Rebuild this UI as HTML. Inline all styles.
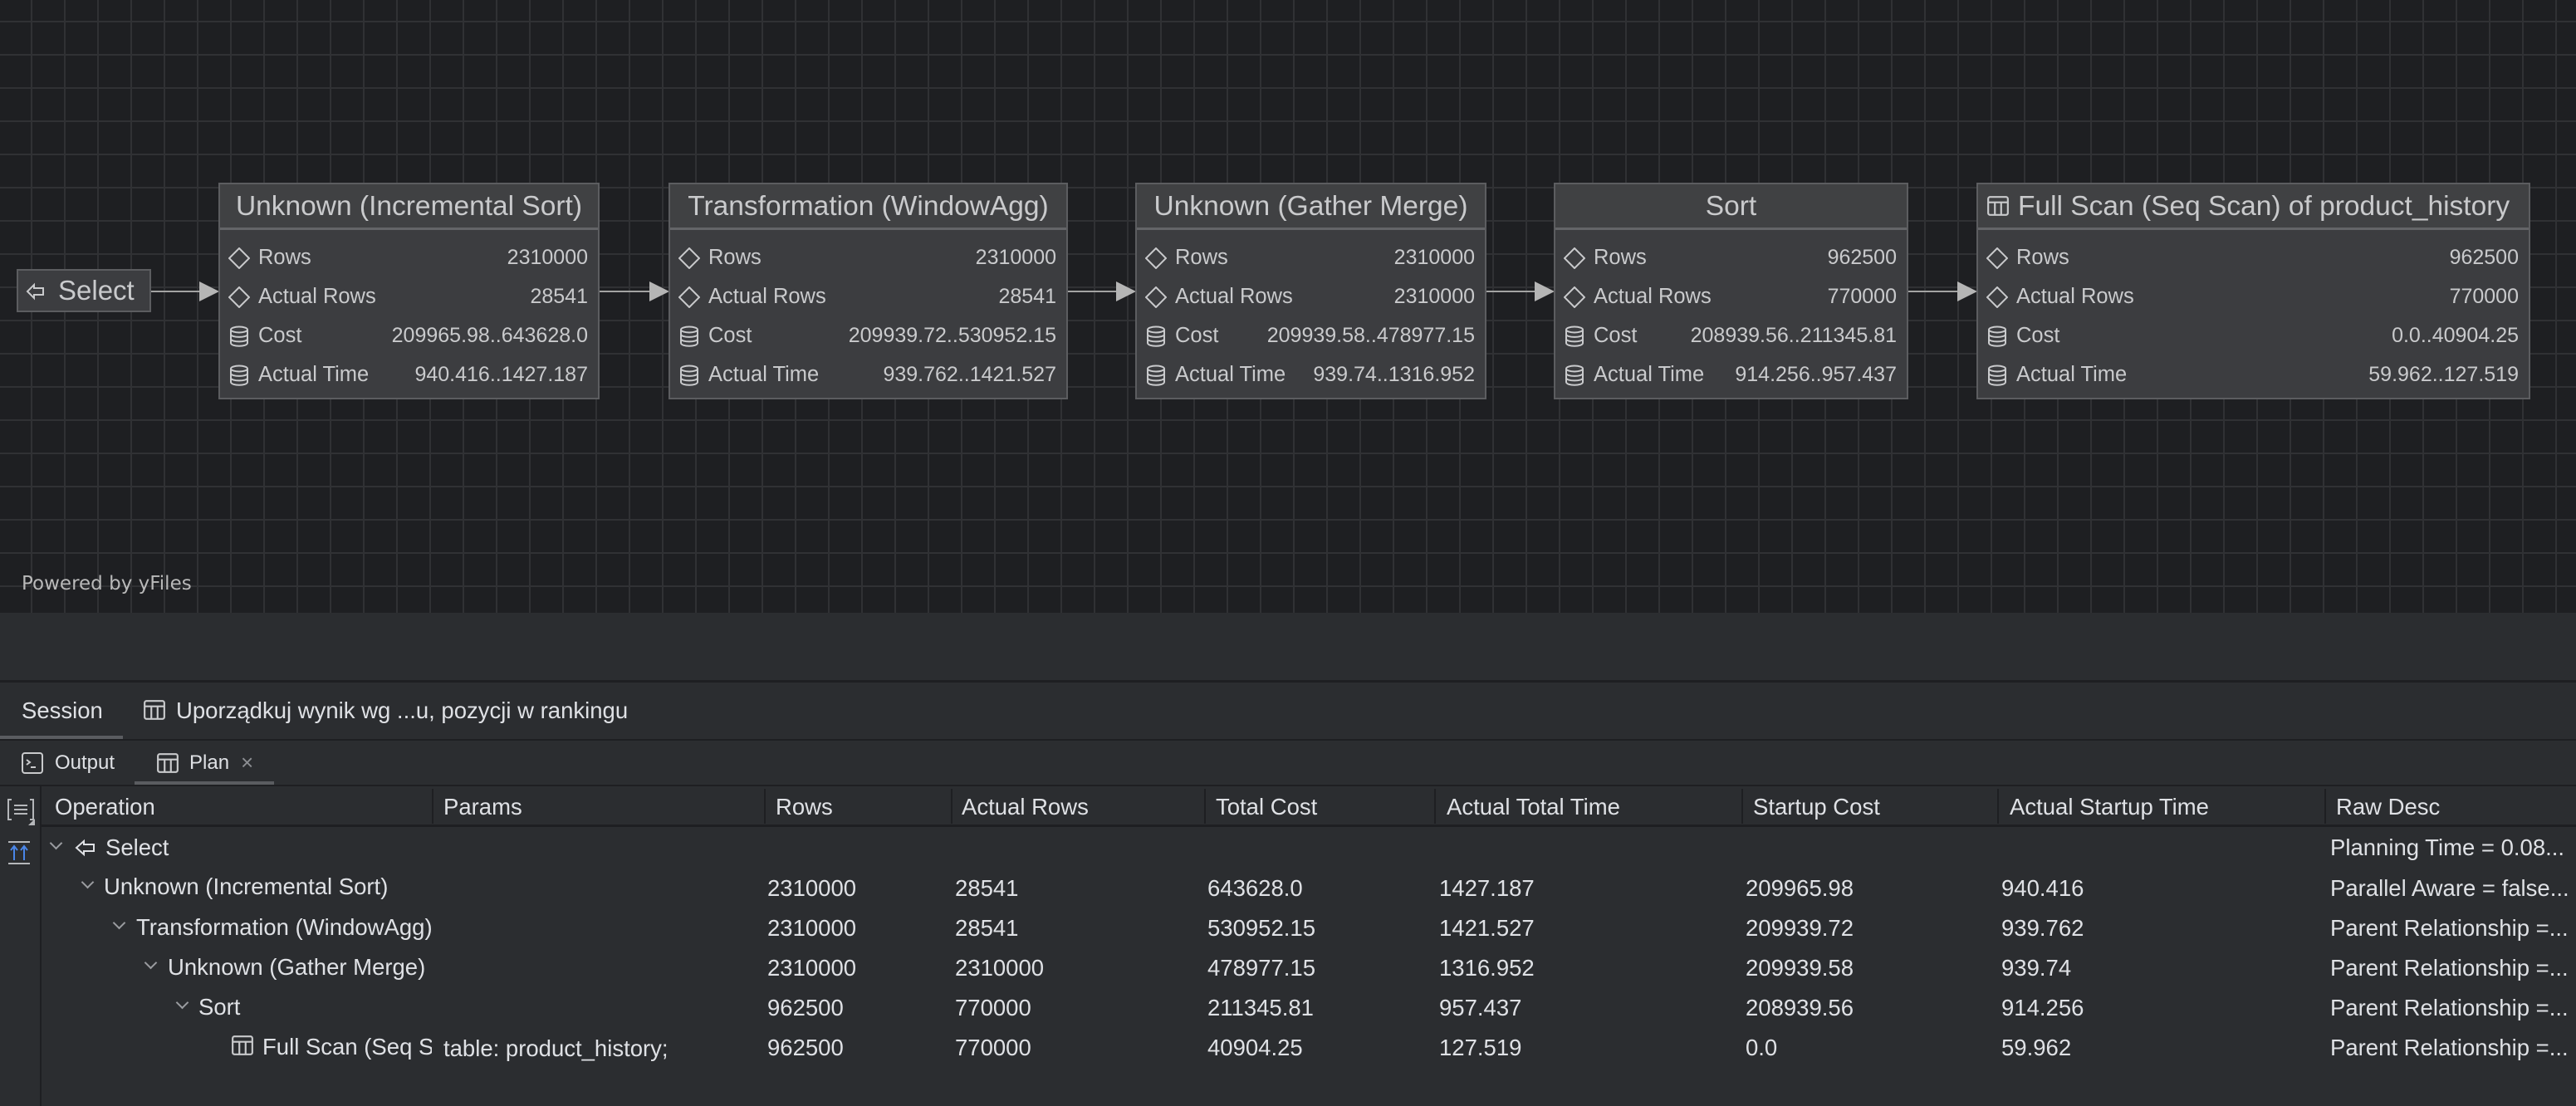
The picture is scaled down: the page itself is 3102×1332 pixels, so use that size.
<!DOCTYPE html>
<html><head><meta charset="utf-8">
<style>
*{margin:0;padding:0;box-sizing:border-box}
body{width:3102px;height:1332px;overflow:hidden;background:#2b2d30;font-family:"Liberation Sans",sans-serif;color:#dfe1e5;position:relative}
#graph{position:absolute;left:0;top:0;width:3102px;height:738px;background-color:#1e1f22;
background-image:linear-gradient(to right,#303134 2px,transparent 2px),linear-gradient(to bottom,#303134 2px,transparent 2px);
background-size:40px 40px;background-position:37px 25px}
.node{position:absolute;top:220px;height:261px;background:#3c3d40;border:2px solid #5c5d60;color:#c9cacc}
.hd{height:55px;border-bottom:3px solid #646568;background:#404143;font-size:33.5px;text-align:center;line-height:54px;white-space:nowrap}
.r{position:absolute;left:10px;right:12px;height:40px;font-size:25.5px;line-height:40px;white-space:nowrap}
.r svg{position:absolute;left:0;top:8px}
.r .l{position:absolute;left:36px}
.r .v{position:absolute;right:0;font-size:25px}
.sel{position:absolute;left:20px;top:324px;width:162px;height:52px;background:#3c3d40;border:2px solid #5c5d60;color:#c9cacc;font-size:33px;line-height:48px}
.arr{position:absolute;height:2px;background:#a3a3a3}
.ah{position:absolute;width:0;height:0;border-top:12px solid transparent;border-bottom:12px solid transparent;border-left:24px solid #b5b5b5}
.pw{position:absolute;left:26px;top:690px;font-family:"DejaVu Sans",sans-serif;font-size:23px;color:#b9b9b9}
.t{position:absolute;font-size:27.5px;white-space:nowrap;color:#dfe1e5}
.hdr{position:absolute;top:956px;font-size:27.5px;color:#dfe1e5}
.div{position:absolute;top:950px;width:2px;height:42px;background:#1e1f22}
.ch{position:absolute;width:11px;height:11px;border-right:2px solid #9a9ca0;border-bottom:2px solid #9a9ca0;transform:rotate(45deg)}
</style></head><body>
<div id="graph"></div>
<div class="pw">Powered by yFiles</div>

<div class="sel"><svg width="26" height="26" viewBox="0 0 26 26" style="position:absolute;left:8px;top:12px"><path d="M3 13 L11 5 L11 9 L22 9 L22 17 L11 17 L11 21 Z" fill="none" stroke="#c9cacc" stroke-width="2"/></svg><span style="position:absolute;left:48px">Select</span></div>

<div class="arr" style="left:182px;top:350px;width:62px"></div><div class="ah" style="left:240px;top:339px"></div>
<div class="arr" style="left:722px;top:350px;width:64px"></div><div class="ah" style="left:782px;top:339px"></div>
<div class="arr" style="left:1286px;top:350px;width:62px"></div><div class="ah" style="left:1344px;top:339px"></div>
<div class="arr" style="left:1790px;top:350px;width:62px"></div><div class="ah" style="left:1848px;top:339px"></div>
<div class="arr" style="left:2298px;top:350px;width:63px"></div><div class="ah" style="left:2357px;top:339px"></div>

<svg width="0" height="0" style="position:absolute"><defs>
<symbol id="dia" viewBox="0 0 26 26"><path d="M13 1 L25 13 L13 25 L1 13 Z" fill="none" stroke="#c9cacc" stroke-width="2"/></symbol>
<symbol id="db" viewBox="0 0 26 26"><ellipse cx="13" cy="5" rx="10" ry="3.5" fill="none" stroke="#c9cacc" stroke-width="2"/><path d="M3 5 V21 C3 26 23 26 23 21 V5 M3 10.5 C3 15 23 15 23 10.5 M3 16 C3 20.5 23 20.5 23 16" fill="none" stroke="#c9cacc" stroke-width="2"/></symbol>
<symbol id="tbl" viewBox="0 0 26 26"><rect x="2" y="3" width="22" height="20" rx="2" fill="none" stroke="#c9cacc" stroke-width="2"/><path d="M2 9 H24 M9.5 9 V23 M16.5 9 V23" stroke="#c9cacc" stroke-width="2"/></symbol>
</defs></svg>

<div class="node" style="left:263px;width:459px"><div class="hd">Unknown (Incremental Sort)</div>
<div class="r" style="top:68px"><svg width="26" height="26"><use href="#dia"/></svg><span class="l">Rows</span><span class="v">2310000</span></div>
<div class="r" style="top:115px"><svg width="26" height="26"><use href="#dia"/></svg><span class="l">Actual Rows</span><span class="v">28541</span></div>
<div class="r" style="top:162px"><svg width="26" height="26"><use href="#db"/></svg><span class="l">Cost</span><span class="v">209965.98..643628.0</span></div>
<div class="r" style="top:209px"><svg width="26" height="26"><use href="#db"/></svg><span class="l">Actual Time</span><span class="v">940.416..1427.187</span></div></div>

<div class="node" style="left:805px;width:481px"><div class="hd">Transformation (WindowAgg)</div>
<div class="r" style="top:68px"><svg width="26" height="26"><use href="#dia"/></svg><span class="l">Rows</span><span class="v">2310000</span></div>
<div class="r" style="top:115px"><svg width="26" height="26"><use href="#dia"/></svg><span class="l">Actual Rows</span><span class="v">28541</span></div>
<div class="r" style="top:162px"><svg width="26" height="26"><use href="#db"/></svg><span class="l">Cost</span><span class="v">209939.72..530952.15</span></div>
<div class="r" style="top:209px"><svg width="26" height="26"><use href="#db"/></svg><span class="l">Actual Time</span><span class="v">939.762..1421.527</span></div></div>

<div class="node" style="left:1367px;width:423px"><div class="hd">Unknown (Gather Merge)</div>
<div class="r" style="top:68px"><svg width="26" height="26"><use href="#dia"/></svg><span class="l">Rows</span><span class="v">2310000</span></div>
<div class="r" style="top:115px"><svg width="26" height="26"><use href="#dia"/></svg><span class="l">Actual Rows</span><span class="v">2310000</span></div>
<div class="r" style="top:162px"><svg width="26" height="26"><use href="#db"/></svg><span class="l">Cost</span><span class="v">209939.58..478977.15</span></div>
<div class="r" style="top:209px"><svg width="26" height="26"><use href="#db"/></svg><span class="l">Actual Time</span><span class="v">939.74..1316.952</span></div></div>

<div class="node" style="left:1871px;width:427px"><div class="hd">Sort</div>
<div class="r" style="top:68px"><svg width="26" height="26"><use href="#dia"/></svg><span class="l">Rows</span><span class="v">962500</span></div>
<div class="r" style="top:115px"><svg width="26" height="26"><use href="#dia"/></svg><span class="l">Actual Rows</span><span class="v">770000</span></div>
<div class="r" style="top:162px"><svg width="26" height="26"><use href="#db"/></svg><span class="l">Cost</span><span class="v">208939.56..211345.81</span></div>
<div class="r" style="top:209px"><svg width="26" height="26"><use href="#db"/></svg><span class="l">Actual Time</span><span class="v">914.256..957.437</span></div></div>

<div class="node" style="left:2380px;width:667px"><div class="hd" style="text-align:left;padding-left:10px"><svg width="28" height="28" style="vertical-align:-3px;margin-right:10px"><use href="#tbl"/></svg>Full Scan (Seq Scan) of product_history</div>
<div class="r" style="top:68px"><svg width="26" height="26"><use href="#dia"/></svg><span class="l">Rows</span><span class="v">962500</span></div>
<div class="r" style="top:115px"><svg width="26" height="26"><use href="#dia"/></svg><span class="l">Actual Rows</span><span class="v">770000</span></div>
<div class="r" style="top:162px"><svg width="26" height="26"><use href="#db"/></svg><span class="l">Cost</span><span class="v">0.0..40904.25</span></div>
<div class="r" style="top:209px"><svg width="26" height="26"><use href="#db"/></svg><span class="l">Actual Time</span><span class="v">59.962..127.519</span></div></div>

<!-- bottom panels -->
<div style="position:absolute;left:0;top:819px;width:3102px;height:3px;background:#1e1f22"></div>
<div class="t" style="left:26px;top:840px">Session</div>
<svg width="28" height="28" style="position:absolute;left:172px;top:841px"><use href="#tbl"/></svg>
<div class="t" style="left:212px;top:840px">Uporządkuj wynik wg ...u, pozycji w rankingu</div>
<div style="position:absolute;left:0;top:886px;width:148px;height:4px;background:#5a5c60"></div>
<div style="position:absolute;left:0;top:890px;width:3102px;height:2px;background:#1e1f22"></div>

<svg width="28" height="28" style="position:absolute;left:25px;top:905px"><rect x="2" y="2" width="24" height="24" rx="3" fill="none" stroke="#c9cacc" stroke-width="2"/><path d="M7 10 L11 13 L7 16 M12 19 H18" fill="none" stroke="#c9cacc" stroke-width="2"/></svg>
<div class="t" style="left:66px;top:905px;font-size:24px">Output</div>
<svg width="28" height="28" style="position:absolute;left:188px;top:905px"><use href="#tbl"/></svg>
<div class="t" style="left:228px;top:905px;font-size:24px">Plan</div>
<div class="t" style="left:290px;top:903px;font-size:26px;color:#8c8e92">×</div>
<div style="position:absolute;left:162px;top:941px;width:168px;height:4px;background:#5a5c60"></div>
<div style="position:absolute;left:0;top:945px;width:3102px;height:2px;background:#1e1f22"></div>

<div style="position:absolute;left:48px;top:947px;width:2px;height:385px;background:#1e1f22"></div>
<div style="position:absolute;left:50px;top:993px;width:3052px;height:3px;background:#1e1f22"></div>
<svg width="34" height="34" style="position:absolute;left:8px;top:960px"><path d="M6 3 H2 V27 H6 M28 3 H32 V27 H28" fill="none" stroke="#b5b7ba" stroke-width="2"/><path d="M9 10 H25 M9 15 H25 M9 20 H25" stroke="#b5b7ba" stroke-width="2"/><path d="M34 26 L34 34 L26 34 Z" fill="#b5b7ba"/></svg>
<svg width="30" height="30" style="position:absolute;left:8px;top:1012px"><path d="M2 2 H28 M2 28 H28" stroke="#b5b7ba" stroke-width="2"/><path d="M9 24 V8 M5 12 L9 7 L13 12 M21 24 V8 M17 12 L21 7 L25 12" fill="none" stroke="#4a86e8" stroke-width="2"/></svg>

<div class="hdr" style="left:66px">Operation</div>
<div class="div" style="left:520px"></div><div class="hdr" style="left:534px">Params</div>
<div class="div" style="left:920px"></div><div class="hdr" style="left:934px">Rows</div>
<div class="div" style="left:1145px"></div><div class="hdr" style="left:1158px">Actual Rows</div>
<div class="div" style="left:1450px"></div><div class="hdr" style="left:1464px">Total Cost</div>
<div class="div" style="left:1727px"></div><div class="hdr" style="left:1742px">Actual Total Time</div>
<div class="div" style="left:2097px"></div><div class="hdr" style="left:2111px">Startup Cost</div>
<div class="div" style="left:2405px"></div><div class="hdr" style="left:2420px">Actual Startup Time</div>
<div class="div" style="left:2799px"></div><div class="hdr" style="left:2813px">Raw Desc</div>

<!-- rows -->
<div class="ch" style="left:62px;top:1010px"></div>
<svg width="26" height="26" style="position:absolute;left:90px;top:1008px"><path d="M2 13 L11 5 L11 9 L23 9 L23 17 L11 17 L11 21 Z" fill="none" stroke="#dfe1e5" stroke-width="2"/></svg>
<div class="t" style="left:127px;top:1005px">Select</div>
<div class="t" style="left:2806px;top:1005px;width:296px;overflow:hidden">Planning Time = 0.08...</div>

<div class="ch" style="left:100px;top:1057px"></div>
<div class="t" style="left:125px;top:1052px">Unknown (Incremental Sort)</div>
<div class="ch" style="left:138px;top:1106px"></div>
<div class="t" style="left:164px;top:1101px;width:356px;overflow:hidden">Transformation (WindowAgg)</div>
<div class="ch" style="left:176px;top:1154px"></div>
<div class="t" style="left:202px;top:1149px">Unknown (Gather Merge)</div>
<div class="ch" style="left:214px;top:1202px"></div>
<div class="t" style="left:239px;top:1197px">Sort</div>
<svg width="28" height="28" style="position:absolute;left:278px;top:1245px"><use href="#tbl"/></svg>
<div class="t" style="left:316px;top:1245px;width:204px;overflow:hidden">Full Scan (Seq Scan)</div>
<div class="t" style="left:534px;top:1247px">table: product_history;</div>

<div class="t" style="left:924px;top:1054px">2310000</div><div class="t" style="left:1150px;top:1054px">28541</div><div class="t" style="left:1454px;top:1054px">643628.0</div><div class="t" style="left:1733px;top:1054px">1427.187</div><div class="t" style="left:2102px;top:1054px">209965.98</div><div class="t" style="left:2410px;top:1054px">940.416</div><div class="t" style="left:2806px;top:1054px;width:296px;overflow:hidden">Parallel Aware = false...</div>
<div class="t" style="left:924px;top:1102px">2310000</div><div class="t" style="left:1150px;top:1102px">28541</div><div class="t" style="left:1454px;top:1102px">530952.15</div><div class="t" style="left:1733px;top:1102px">1421.527</div><div class="t" style="left:2102px;top:1102px">209939.72</div><div class="t" style="left:2410px;top:1102px">939.762</div><div class="t" style="left:2806px;top:1102px">Parent Relationship =...</div>
<div class="t" style="left:924px;top:1150px">2310000</div><div class="t" style="left:1150px;top:1150px">2310000</div><div class="t" style="left:1454px;top:1150px">478977.15</div><div class="t" style="left:1733px;top:1150px">1316.952</div><div class="t" style="left:2102px;top:1150px">209939.58</div><div class="t" style="left:2410px;top:1150px">939.74</div><div class="t" style="left:2806px;top:1150px">Parent Relationship =...</div>
<div class="t" style="left:924px;top:1198px">962500</div><div class="t" style="left:1150px;top:1198px">770000</div><div class="t" style="left:1454px;top:1198px">211345.81</div><div class="t" style="left:1733px;top:1198px">957.437</div><div class="t" style="left:2102px;top:1198px">208939.56</div><div class="t" style="left:2410px;top:1198px">914.256</div><div class="t" style="left:2806px;top:1198px">Parent Relationship =...</div>
<div class="t" style="left:924px;top:1246px">962500</div><div class="t" style="left:1150px;top:1246px">770000</div><div class="t" style="left:1454px;top:1246px">40904.25</div><div class="t" style="left:1733px;top:1246px">127.519</div><div class="t" style="left:2102px;top:1246px">0.0</div><div class="t" style="left:2410px;top:1246px">59.962</div><div class="t" style="left:2806px;top:1246px">Parent Relationship =...</div>
</body></html>
